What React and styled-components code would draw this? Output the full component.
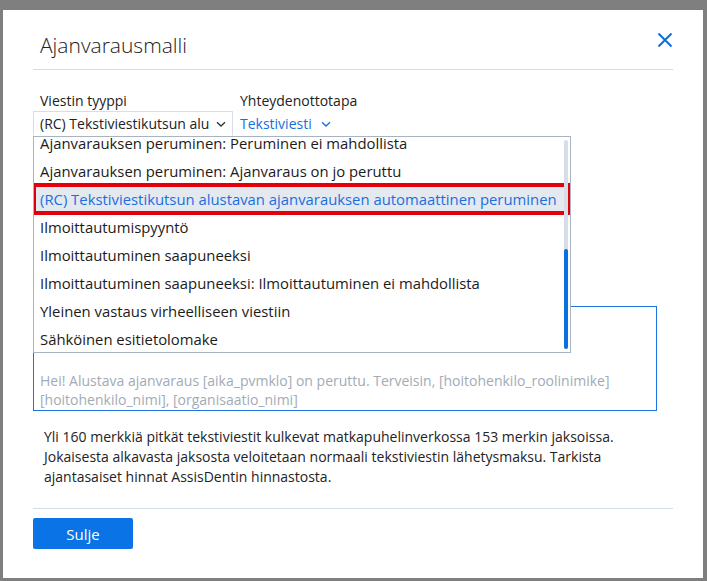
import React from "react";
import styled, { createGlobalStyle } from "styled-components";

const Global = createGlobalStyle`
  html, body { margin: 0; padding: 0; }
  body {
    background: #7f7f7f;
    font-family: "Open Sans", "Liberation Sans", sans-serif;
    width: 707px;
    height: 581px;
    overflow: hidden;
  }
`;

const Backdrop = styled.div`
  width: 707px;
  height: 581px;
  padding: 10px 4px 3px 3px;
  box-sizing: border-box;
`;

const Dialog = styled.div`
  background: #ffffff;
  width: 700px;
  height: 568px;
  box-sizing: border-box;
  padding: 0 30px;
  display: flex;
  flex-direction: column;
`;

const Header = styled.div`
  height: 60px;
  display: flex;
  align-items: flex-end;
  justify-content: space-between;
  border-bottom: 1px solid #d3dde9;
  box-sizing: border-box;
  padding: 0 0 9px 7px;
`;

const Title = styled.h1`
  margin: 0;
  font-size: 21px;
  font-weight: 300;
  color: #222;
  line-height: 30px;
`;

const CloseButton = styled.button`
  border: none;
  background: none;
  padding: 0;
  width: 16px;
  height: 16px;
  margin: 0 0 12px 0;
  color: #0b6fdc;
  display: flex;
  cursor: pointer;
`;

const Body = styled.div`
  display: flex;
  flex-direction: column;
  padding-top: 21px;
  flex: 1;
`;

const FieldRow = styled.div`
  display: flex;
  position: relative;
`;

const Field = styled.div`
  display: flex;
  flex-direction: column;
  width: ${(p) => p.$width}px;
`;

const Label = styled.div`
  font-size: 14px;
  color: #222;
  line-height: 20px;
  padding-left: 7px;
`;

const Select = styled.div`
  height: 25px;
  box-sizing: border-box;
  border: 1px solid ${(p) => (p.$plain ? "transparent" : "#d7dee7")};
  border-bottom-color: transparent;
  display: flex;
  align-items: center;
  gap: 6px;
  padding-left: 6px;
  font-size: 14px;
  color: ${(p) => (p.$plain ? "#1470dc" : "#222")};
  white-space: nowrap;
  overflow: hidden;
`;

const Chevron = styled.svg`
  width: 12px;
  height: 12px;
  flex: none;
  margin-left: ${(p) => p.$gap || 0}px;
`;

const List = styled.ul`
  position: absolute;
  left: 0;
  top: 45px;
  width: 538px;
  height: 217px;
  box-sizing: border-box;
  margin: 0;
  padding: 0;
  list-style: none;
  background: #fff;
  border: 1px solid #a9b4c2;
  overflow: hidden;
  z-index: 5;
`;

const ListInner = styled.div`
  margin-top: -8px;
`;

const Item = styled.li`
  height: 28px;
  line-height: 28px;
  padding-left: 6px;
  font-size: 14.85px;
  white-space: nowrap;
  position: relative;
  color: ${(p) => (p.$active ? "#1a6fe0" : "#1b1b1b")};
  background: ${(p) => (p.$active ? "#e4e9ef" : "transparent")};
  outline: ${(p) => (p.$active ? "4px solid #e4000b" : "none")};
  outline-offset: -2px;
  z-index: ${(p) => (p.$active ? 1 : 0)};
`;

const ScrollTrack = styled.div`
  position: absolute;
  right: 2px;
  top: 3px;
  bottom: 3px;
  width: 4px;
  border-radius: 2px;
  background: #d6dde6;
  z-index: 2;
`;

const ScrollThumb = styled.div`
  position: absolute;
  left: 0;
  right: 0;
  bottom: 0;
  border-radius: 2px;
  background: #0a6fe0;
`;

const MessageBox = styled.div`
  margin-top: 170px;
  width: 624px;
  height: 105px;
  box-sizing: border-box;
  border: 1px solid #1d74e0;
  padding: 64px 8px 0 6px;
  font-size: 14px;
  line-height: 19px;
  color: #a2abb6;
`;

const Hint = styled.p`
  margin: 16px 0 0 0;
  padding-left: 11px;
  font-size: 14px;
  line-height: 20px;
  color: #232323;
`;

const Footer = styled.div`
  margin-top: auto;
  border-top: 1px solid #d3dde9;
  padding: 9px 0 29px 0;
`;

const PrimaryButton = styled.button`
  width: 100px;
  height: 31px;
  border: none;
  border-radius: 2px;
  background: #0a74e7;
  color: #fff;
  font-family: inherit;
  font-size: 15px;
  cursor: pointer;
`;

const ChevronIcon = ({ color, gap }) => (
  <Chevron viewBox="0 0 12 12" $gap={gap}>
    <path d="M2 4.2 L6 8 L10 4.2" fill="none" stroke={color} strokeWidth="1.3" />
  </Chevron>
);

const items = [
  "Ajanvarauksen peruminen: Peruminen ei mahdollista",
  "Ajanvarauksen peruminen: Ajanvaraus on jo peruttu",
  "(RC) Tekstiviestikutsun alustavan ajanvarauksen automaattinen peruminen",
  "Ilmoittautumispyyntö",
  "Ilmoittautuminen saapuneeksi",
  "Ilmoittautuminen saapuneeksi: Ilmoittautuminen ei mahdollista",
  "Yleinen vastaus virheelliseen viestiin",
  "Sähköinen esitietolomake",
];

export default function App() {
  return (
    <>
      <Global />
      <Backdrop>
        <Dialog>
          <Header>
            <Title>Ajanvarausmalli</Title>
            <CloseButton aria-label="Sulje">
              <svg viewBox="0 0 16 16" width="16" height="16">
                <path d="M1.5 1.5 L14.5 14.5 M14.5 1.5 L1.5 14.5" stroke="currentColor" strokeWidth="2" fill="none" />
              </svg>
            </CloseButton>
          </Header>
          <Body>
            <FieldRow>
              <Field $width={200}>
                <Label>Viestin tyyppi</Label>
                <Select>
                  (RC) Tekstiviestikutsun alu
                  <ChevronIcon color="#333" />
                </Select>
              </Field>
              <Field $width={200}>
                <Label>Yhteydenottotapa</Label>
                <Select $plain>
                  Tekstiviesti
                  <ChevronIcon color="#1470dc" gap={2} />
                </Select>
              </Field>
              <List>
                <ListInner>
                  {items.map((t, i) => (
                    <Item key={t} $active={i === 2}>
                      {t}
                    </Item>
                  ))}
                </ListInner>
                <ScrollTrack>
                  <ScrollThumb style={{ height: "48%" }} />
                </ScrollTrack>
              </List>
            </FieldRow>
            <MessageBox>
              Hei! Alustava ajanvaraus [aika_pvmklo] on peruttu. Terveisin, [hoitohenkilo_roolinimike] [hoitohenkilo_nimi], [organisaatio_nimi]
            </MessageBox>
            <Hint>
              Yli 160 merkkiä pitkät tekstiviestit kulkevat matkapuhelinverkossa 153 merkin jaksoissa. Jokaisesta alkavasta jaksosta veloitetaan normaali tekstiviestin lähetysmaksu. Tarkista ajantasaiset hinnat AssisDentin hinnastosta.
            </Hint>
          </Body>
          <Footer>
            <PrimaryButton>Sulje</PrimaryButton>
          </Footer>
        </Dialog>
      </Backdrop>
    </>
  );
}
